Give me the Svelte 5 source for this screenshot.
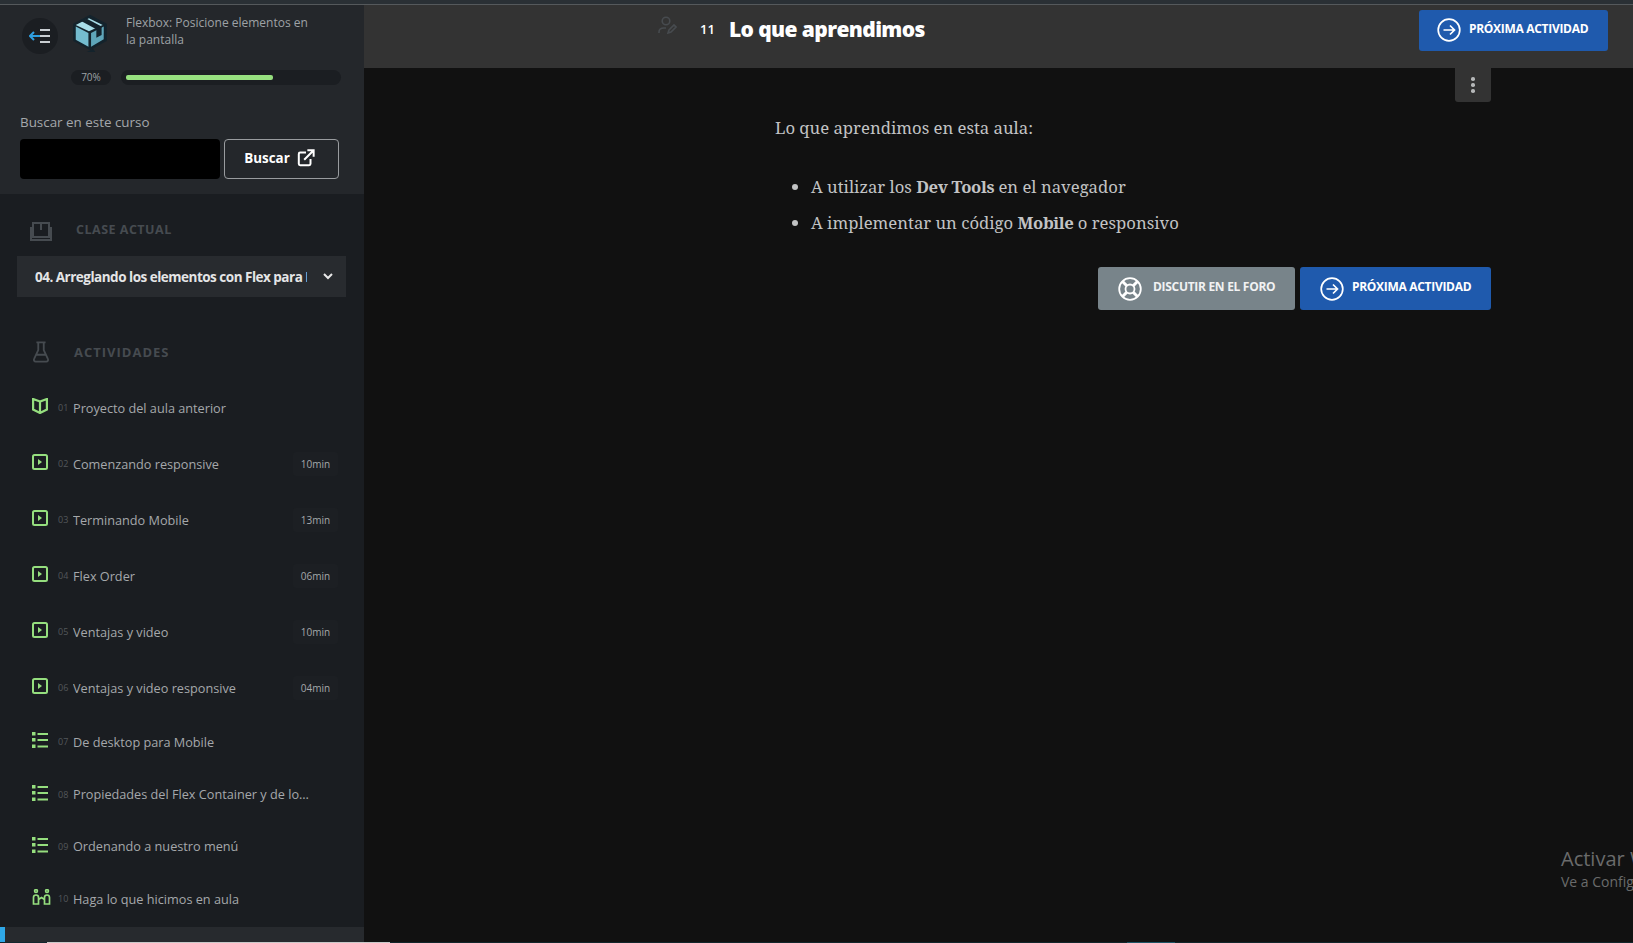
<script>
  const activities = [
    { n: '01', title: 'Proyecto del aula anterior', icon: 'book' },
    { n: '02', title: 'Comenzando responsive', icon: 'play', time: '10min' },
    { n: '03', title: 'Terminando Mobile', icon: 'play', time: '13min' },
    { n: '04', title: 'Flex Order', icon: 'play', time: '06min' },
    { n: '05', title: 'Ventajas y video', icon: 'play', time: '10min' },
    { n: '06', title: 'Ventajas y video responsive', icon: 'play', time: '04min' },
    { n: '07', title: 'De desktop para Mobile', icon: 'list' },
    { n: '08', title: 'Propiedades del Flex Container y de los Flex Items', icon: 'list' },
    { n: '09', title: 'Ordenando a nuestro menú', icon: 'list' },
    { n: '10', title: 'Haga lo que hicimos en aula', icon: 'people' }
  ];
</script>

{#snippet arrow()}
  <svg class="btn-icon" viewBox="0 0 24 24" fill="none" stroke="#fff" stroke-width="1.7">
    <circle cx="12" cy="12" r="10.8" />
    <path d="M6.5 12h11M13 7.5l4.500 4.500-4.500 4.500" />
  </svg>
{/snippet}

<div class="page">
  <aside class="sidebar">
    <div class="course">
      <div class="course-top">
        <div class="back">
          <svg width="22" height="16" viewBox="0 0 22 16">
            <path d="M11 8H1M5 4 1 8l4 4" fill="none" stroke="#2f9fe0" stroke-width="2" />
            <path d="M11 2h10M11 8h10M11 14h10" stroke="#c9ced2" stroke-width="2" />
          </svg>
        </div>
        <svg class="logo" width="36" height="38" viewBox="0 0 34 36">
          <path d="M17 1 32 9v15l-15 8L2 24V9z" fill="#14232c" stroke="#14232c" stroke-width="2" stroke-linejoin="round" />
          <path d="M22 35H14l6-3z" fill="#14232c" />
          <path d="M3.500 11l12 6v13l-12-6.500z" fill="#74bccf" />
          <path d="M3.500 9.500 16 3l13 6.500-13 6z" fill="#a8dde8" />
          <path d="M18 17l12-6v12l-12 7z" fill="#5fa6ba" />
          <path d="M9 6 14 3.500 28 11v8l-5 2.500V13.500z" fill="#14232c" />
        </svg>
        <p class="course-title">Flexbox: Posicione elementos en la pantalla</p>
      </div>
      <div class="progress">
        <span class="percent">70%</span>
        <div class="track"><div class="fill" style="width: 70%"></div></div>
      </div>
      <label class="search-label" for="buscar">Buscar en este curso</label>
      <div class="search">
        <input id="buscar" type="text" />
        <button class="search-btn">
          Buscar
          <svg width="18" height="18" viewBox="0 0 20 20" fill="none" stroke="#fff" stroke-width="2.200">
            <path d="M10 4H3.500a1.500 1.500 0 0 0-1.500 1.500v11A1.500 1.500 0 0 0 3.500 18h10a1.500 1.500 0 0 0 1.500-1.500V11" />
            <path d="M8 12 18 2M11.500 1.500h7v7" />
          </svg>
        </button>
      </div>
    </div>

    <div class="section-head current-head">
      <svg class="book-head" width="22" height="19" viewBox="0 0 22 19" fill="none" stroke="#464b50" stroke-width="2">
        <path d="M3 1h16v14H3zM1 5v13h20V5M11 1v7" />
      </svg>
      <span>CLASE ACTUAL</span>
    </div>
    <div class="select">
      <span class="select-text">04. Arreglando los elementos con Flex para Mobile</span>
      <svg width="10" height="7" viewBox="0 0 10 7" fill="none" stroke="#e8e8e8" stroke-width="2">
        <path d="M1 1l4 4 4-4" />
      </svg>
    </div>

    <div class="section-head activities-head">
      <svg width="18" height="22" viewBox="0 0 18 24" fill="none" stroke="#464b50" stroke-width="2">
        <path d="M4 1.500h10M6 1.500V10L1.500 19.500A2 2 0 0 0 3.300 22.500h11.400a2 2 0 0 0 1.800-3L12 10V1.500M4 15h10" />
      </svg>
      <span>ACTIVIDADES</span>
    </div>

    <ul class="activities">
      {#each activities as a}
        <li class="activity">
          <span class="icon">
            {#if a.icon === 'book'}
              <svg width="16" height="16" viewBox="0 0 16 16" fill="none" stroke="#95de7e" stroke-width="2.200">
                <path d="M8 3.500 1.100 1v10.500L8 15l6.900-3.500V1zM8 3.500V15" />
              </svg>
            {:else if a.icon === 'play'}
              <svg width="16" height="16" viewBox="0 0 16 16">
                <rect x="1" y="1" width="14" height="14" rx="1.500" fill="none" stroke="#95de7e" stroke-width="2" />
                <path d="M6 5l4 3-4 3z" fill="#95de7e" />
              </svg>
            {:else if a.icon === 'list'}
              <svg width="16" height="16" viewBox="0 0 16 16" fill="#95de7e">
                <rect y="0" width="3.500" height="3.500" />
                <rect y="6" width="3.500" height="3.500" />
                <rect y="12.500" width="3.500" height="3.500" />
                <rect x="5.500" y="1" width="10.500" height="2" />
                <rect x="5.500" y="7" width="10.500" height="2" />
                <rect x="5.500" y="13.500" width="10.500" height="2" />
              </svg>
            {:else}
              <svg width="19" height="16" viewBox="0 0 19 16" fill="none" stroke="#95de7e" stroke-width="1.700">
                <circle cx="4" cy="2" r="1.400" />
                <circle cx="15" cy="2" r="1.400" />
                <path d="M1.500 15V8.500Q1.500 6 4 6t2.500 2.500V15zM12.500 15V8.500Q12.500 6 15 6t2.500 2.500V15zM6.500 10.500 9.500 8.500l3 2" />
              </svg>
            {/if}
          </span>
          <span class="num">{a.n}</span>
          <span class="name">{a.title}</span>
          {#if a.time}<span class="time">{a.time}</span>{/if}
        </li>
      {/each}
    </ul>
    <div class="active-row"></div>
  </aside>

  <main class="main">
    <header class="topbar">
      <div class="heading">
        <svg class="editor" width="19" height="18" viewBox="0 0 19 18" fill="none" stroke="#474b4f" stroke-width="1.600">
          <circle cx="8" cy="5" r="3.800" />
          <path d="M1 17v-1c0-2.500 2-4 5-4h2M10 17l1-3 5-5 2 2-5 5z" />
        </svg>
        <span class="index">11</span>
        <h1>Lo que aprendimos</h1>
      </div>
      <button class="btn primary top-next">{@render arrow()} <span class="btn-label">PRÓXIMA ACTIVIDAD</span></button>
    </header>

    <div class="content">
      <div class="menu-wrap">
        <div class="menu">
          <span></span><span></span><span></span>
        </div>
      </div>
      <div class="text">
        <p>Lo que aprendimos en esta aula:</p>
        <ul>
          <li>A utilizar los <strong>Dev Tools</strong> en el navegador</li>
          <li>A implementar un código <strong>Mobile</strong> o responsivo</li>
        </ul>
        <div class="actions">
          <button class="btn forum">
            <svg class="btn-icon" viewBox="0 0 24 24" fill="none" stroke="#fff" stroke-width="1.800">
              <circle cx="12" cy="12" r="10.800" />
              <circle cx="12" cy="12" r="4.500" />
              <path d="M4.300 4.300l4.500 4.500M19.700 4.300l-4.500 4.500M4.300 19.700l4.500-4.500M19.700 19.700l-4.500-4.500" stroke-width="3" />
            </svg>
            <span class="btn-label">DISCUTIR EN EL FORO</span>
          </button>
          <button class="btn primary">{@render arrow()} <span class="btn-label">PRÓXIMA ACTIVIDAD</span></button>
        </div>
      </div>
      <div class="watermark">
        <div class="wm-title">Activar Windows</div>
        <div class="wm-sub">Ve a Configuración para activar Windows.</div>
      </div>
    </div>
  </main>

  <div class="screen-edge">
    <span class="edge-dark"></span>
    <span class="edge-white"></span>
    <span class="edge-teal"></span>
    <span class="edge-bright"></span>
    <span class="edge-teal rest"></span>
  </div>
</div>

<style>
  :global(body) {
    background: #111111;
    overflow: hidden;
  }

  .page {
    display: grid;
    grid-template-columns: 364px 1fr;
    height: 943px;
    overflow: hidden;
    border-top: 4px solid #2a3035;
    box-sizing: border-box;
    font-family: "Open Sans", sans-serif;
    position: relative;
  }

  .sidebar {
    background: #1a1d21;
    display: flex;
    flex-direction: column;
    overflow: hidden;
    position: relative;
  }

  .course {
    background: #24272b;
    border-top: 1px solid #55595c;
    height: 189px;
    padding: 0 23px 0 20px;
    flex: none;
  }

  .course-top {
    display: flex;
    align-items: flex-start;
    padding-top: 10px;
    height: 50px;
  }

  .back {
    width: 36px;
    height: 36px;
    border-radius: 50%;
    background: #1b1e22;
    display: flex;
    align-items: center;
    justify-content: center;
    margin: 3px 0 0 2px;
    flex: none;
  }

  .logo {
    margin-left: 14px;
    flex: none;
  }

  .course-title {
    margin: -1px 0 0 18px;
    font-size: 12px;
    line-height: 17px;
    color: #9ea2a6;
    width: 188px;
  }

  .progress {
    display: flex;
    align-items: center;
    margin: 5px 0 0 51px;
    gap: 10px;
  }

  .percent {
    width: 40px;
    height: 15px;
    border-radius: 8px;
    background: #1b1e22;
    color: #9ea2a6;
    font-size: 10px;
    line-height: 15px;
    text-align: center;
  }

  .track {
    width: 220px;
    height: 15px;
    border-radius: 8px;
    background: #1b1e22;
    padding: 5px;
    box-sizing: border-box;
  }

  .fill {
    height: 5px;
    background: #95de7e;
    border-radius: 2px;
  }

  .search-label {
    display: block;
    margin-top: 28px;
    font-size: 13.400px;
    line-height: 18px;
    color: #a5a8ab;
  }

  .search {
    display: flex;
    gap: 4px;
    margin-top: 8px;
  }

  input {
    width: 200px;
    height: 40px;
    box-sizing: border-box;
    background: #000;
    border: none;
    border-radius: 4px;
  }

  .search-btn {
    width: 115px;
    height: 40px;
    display: flex;
    align-items: center;
    justify-content: center;
    gap: 7px;
    background: transparent;
    border: 1px solid #999c9f;
    border-radius: 4px;
    color: #fff;
    font-family: "Open Sans", sans-serif;
    font-size: 13.400px;
    font-weight: 700;
    padding: 0 4px 2px 0;
  }

  .section-head {
    display: flex;
    align-items: center;
    color: #464b50;
    font-weight: 700;
    font-size: 13px;
    flex: none;
  }

  .current-head {
    margin: 25px 0 0 30px;
    gap: 24px;
    height: 20px;
    font-size: 12.500px;
    letter-spacing: 0.5px;
  }

  .book-head {
    margin-top: 4px;
  }

  .select {
    margin: 17px 18px 0 17px;
    height: 41px;
    background: #282b2f;
    display: flex;
    align-items: center;
    justify-content: space-between;
    padding: 0 13px 0 18px;
    flex: none;
  }

  .select-text {
    width: 272px;
    overflow: hidden;
    white-space: nowrap;
    font-size: 13.500px;
    font-weight: 700;
    letter-spacing: -0.5px;
    color: #e4e5e6;
  }

  .activities-head {
    margin: 43px 0 0 32px;
    gap: 24px;
    height: 24px;
    letter-spacing: 1px;
  }

  .activities {
    list-style: none;
    margin: 15.500px 0 0;
    padding: 0;
    flex: none;
  }

  .activity {
    display: flex;
    align-items: center;
    height: 56px;
    padding: 0 26px 0 32px;
  }

  .activity:nth-child(n + 7) {
    height: 52.300px;
  }

  .activity:nth-child(7) {
    height: 52.500px;
  }

  .icon {
    width: 26px;
    display: flex;
    flex: none;
    margin-top: -3px;
  }

  .num {
    width: 15px;
    color: #53575b;
    font-size: 9px;
    flex: none;
  }

  .name {
    flex: 1;
    min-width: 0;
    font-size: 12.700px;
    color: #a5a8ab;
    white-space: nowrap;
    overflow: hidden;
    text-overflow: ellipsis;
    padding-right: 26px;
  }

  .time {
    width: 45px;
    height: 24px;
    line-height: 24px;
    text-align: center;
    background: #1c1f23;
    color: #a5a8ab;
    font-size: 10px;
    border-radius: 3px;
    flex: none;
  }

  .active-row {
    position: absolute;
    left: 0;
    right: 0;
    bottom: 0;
    height: 16px;
    background: #272a2e;
    border-left: 5px solid #2fa8e8;
  }

  .main {
    display: flex;
    flex-direction: column;
    min-width: 0;
  }

  .topbar {
    height: 64px;
    background: #333333;
    border-top: 1px solid #55595c;
    box-sizing: border-box;
    position: relative;
    flex: none;
    display: flex;
    align-items: flex-start;
    justify-content: flex-end;
    padding: 5px 25px 0 0;
  }

  .heading {
    position: absolute;
    left: 294px;
    top: 6px;
    display: flex;
    align-items: center;
    height: 36px;
  }

  .editor {
    margin-top: -8px;
  }

  .index {
    margin-left: 23px;
    color: #fff;
    font-size: 13px;
    font-weight: 600;
  }

  h1 {
    margin: 0 0 0 14px;
    font-family: "Open Sans", sans-serif;
    font-size: 21px;
    font-weight: 800;
    letter-spacing: -0.6px;
    color: #fff;
  }

  .btn {
    display: flex;
    align-items: center;
    border: none;
    border-radius: 3px;
    color: #fff;
    font-family: "Open Sans", sans-serif;
    font-size: 12px;
    font-weight: 700;
    letter-spacing: -0.3px;
    padding: 0;
    white-space: nowrap;
  }

  .btn-label {
    margin-bottom: 4px;
  }

  .primary {
    background: #1f5aad;
    width: 191px;
    height: 43px;
    padding-left: 20px;
    box-sizing: border-box;
    gap: 8px;
  }

  .top-next {
    width: 189px;
    height: 41px;
    padding: 0 0 2px 18px;
  }

  .top-next .btn-label {
    margin-bottom: 2px;
  }

  .forum {
    background: #78848a;
    width: 197px;
    height: 43px;
    padding-left: 20px;
    box-sizing: border-box;
    gap: 11px;
    color: #f1f2f3;
  }

  .btn-icon {
    width: 24px;
    height: 24px;
    flex: none;
  }

  .content {
    flex: 1;
    position: relative;
    padding-left: 411px;
  }

  .menu-wrap {
    position: absolute;
    left: 1091px;
    top: 0;
  }

  .menu {
    width: 36px;
    height: 34px;
    background: #333333;
    border-radius: 0 0 3px 3px;
    display: flex;
    flex-direction: column;
    align-items: center;
    justify-content: center;
    gap: 2.500px;
  }

  .menu span {
    width: 3.500px;
    height: 3.500px;
    border-radius: 50%;
    background: #b5b7b8;
  }

  .text {
    width: 716px;
    color: #c2c3c4;
    font-family: "Noto Serif", "DejaVu Serif", "Liberation Serif", serif;
    font-size: 16.700px;
  }

  .text p {
    margin: 47px 0 0;
    line-height: 26px;
  }

  .text ul {
    margin: 33px 0 0;
    padding-left: 36px;
  }

  .text li {
    line-height: 26px;
    margin-bottom: 10px;
  }

  .text strong {
    letter-spacing: -0.4px;
  }

  .actions {
    display: flex;
    justify-content: flex-end;
    gap: 5px;
    margin-top: 31px;
  }

  .watermark {
    position: absolute;
    left: 1197px;
    top: 778px;
    white-space: nowrap;
    font-family: "Open Sans", sans-serif;
    color: #6a6b6b;
  }

  .wm-title {
    font-size: 20px;
    line-height: 26px;
  }

  .wm-sub {
    font-size: 14px;
    line-height: 20px;
  }

  .screen-edge {
    position: absolute;
    left: 0;
    right: 0;
    bottom: 0;
    height: 1px;
    display: flex;
  }

  .edge-dark {
    width: 47px;
    background: #14272e;
  }

  .edge-white {
    width: 343px;
    background: #c9c9c9;
  }

  .edge-teal {
    width: 737px;
    background: #12262b;
  }

  .edge-teal.rest {
    flex: 1;
  }

  .edge-bright {
    width: 48px;
    background: #1d5566;
  }
</style>
